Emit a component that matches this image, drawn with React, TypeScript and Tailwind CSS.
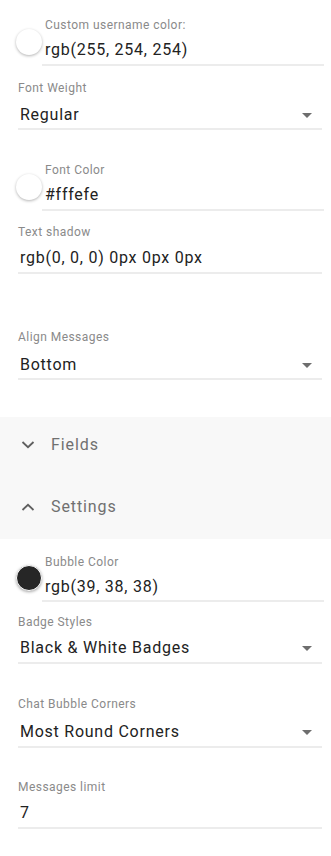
import { ReactNode } from "react";

const font = { fontFamily: "Roboto, 'Liberation Sans', sans-serif" };

function Label({ children }: { children: ReactNode }) {
  return (
    <div className="h-[16px] text-[12px] leading-[16px] tracking-[0.45px] text-[#8a8a8a]">
      {children}
    </div>
  );
}

function Arrow() {
  return (
    <svg width="10" height="5" viewBox="0 0 10 5" className="mr-[10px] shrink-0">
      <path d="M0 0h10L5 5z" fill="#6e6e6e" />
    </svg>
  );
}

function ColorField({
  label,
  value,
  swatch,
  className,
  pb,
}: {
  label: string;
  value: string;
  swatch: string;
  className: string;
  pb: string;
}) {
  return (
    <div className={`flex items-end pl-[16px] pr-[7px] ${className}`}>
      <div
        className={`mb-[11px] h-[26px] w-[26px] shrink-0 rounded-full ${swatch}`}
      />
      <div className="flex-1">
        <div className="pl-[3px]">
          <Label>{label}</Label>
        </div>
        <div className={`mt-[5px] border-b-2 border-[#ececec] pl-[3px] ${pb}`}>
          <div className="h-[24px] text-[16px] leading-[24px] tracking-[0.75px] text-[#222]">
            {value}
          </div>
        </div>
      </div>
    </div>
  );
}

function Field({
  label,
  value,
  select,
  className,
  gap,
  pb,
}: {
  label: string;
  value: string;
  select?: boolean;
  className: string;
  gap: string;
  pb: string;
}) {
  return (
    <div className={`pl-[18px] pr-[9px] ${className}`}>
      <Label>{label}</Label>
      <div
        className={`flex items-center justify-between border-b-2 border-[#ececec] pl-[2px] ${gap} ${pb}`}
      >
        <div className="h-[24px] text-[16px] leading-[24px] tracking-[0.75px] text-[#222]">
          {value}
        </div>
        {select && <Arrow />}
      </div>
    </div>
  );
}

function Chevron({ up }: { up?: boolean }) {
  return (
    <svg width="14" height="8" viewBox="0 0 14 8" className="shrink-0">
      <path
        d={up ? "M1.5 7L7 1.8 12.5 7" : "M1.5 1L7 6.2 12.5 1"}
        fill="none"
        stroke="#5f5f5f"
        strokeWidth="1.8"
      />
    </svg>
  );
}

function Section({ title, up }: { title: string; up?: boolean }) {
  return (
    <div className="flex h-[48px] items-center pl-[21px]">
      <Chevron up={up} />
      <span className="ml-[16px] text-[16px] tracking-[0.9px] text-[#707070]">
        {title}
      </span>
    </div>
  );
}

export default function App() {
  return (
    <div className="min-h-[856px] w-[331px] bg-white" style={font}>
      <ColorField
        label="Custom username color:"
        value="rgb(255, 254, 254)"
        swatch="bg-white shadow-[0_1px_3px_rgba(0,0,0,0.3)]"
        className="pt-[17px]"
        pb="pb-[2px]"
      />
      <Field
        label="Font Weight"
        value="Regular"
        select
        className="mt-[14px]"
        gap="mt-[7px]"
        pb="pb-[1px]"
      />
      <ColorField
        label="Font Color"
        value="#fffefe"
        swatch="bg-white shadow-[0_1px_3px_rgba(0,0,0,0.3)]"
        className="mt-[32px]"
        pb="pb-[2px]"
      />
      <Field
        label="Text shadow"
        value="rgb(0, 0, 0) 0px 0px 0px"
        className="mt-[13px]"
        gap="mt-[6px]"
        pb="pb-[2px]"
      />
      <Field
        label="Align Messages"
        value="Bottom"
        select
        className="mt-[55px]"
        gap="mt-[8px]"
        pb="pb-[1px]"
      />

      <div className="mt-[37px] bg-[#f8f8f8] pb-[8px] pt-[4px]">
        <Section title="Fields" />
        <div className="mt-[14px]">
          <Section title="Settings" up />
        </div>
      </div>

      <ColorField
        label="Bubble Color"
        value="rgb(39, 38, 38)"
        swatch="bg-[#262626] border border-white shadow-[0_1px_3px_rgba(0,0,0,0.35)]"
        className="mt-[15px]"
        pb="pb-[1px]"
      />
      <Field
        label="Badge Styles"
        value="Black & White Badges"
        select
        className="mt-[12px]"
        gap="mt-[6px]"
        pb="pb-[2px]"
      />
      <Field
        label="Chat Bubble Corners"
        value="Most Round Corners"
        select
        className="mt-[32px]"
        gap="mt-[8px]"
        pb="pb-[2px]"
      />
      <Field
        label="Messages limit"
        value="7"
        className="mt-[31px]"
        gap="mt-[6px]"
        pb="pb-[2px]"
      />
    </div>
  );
}
